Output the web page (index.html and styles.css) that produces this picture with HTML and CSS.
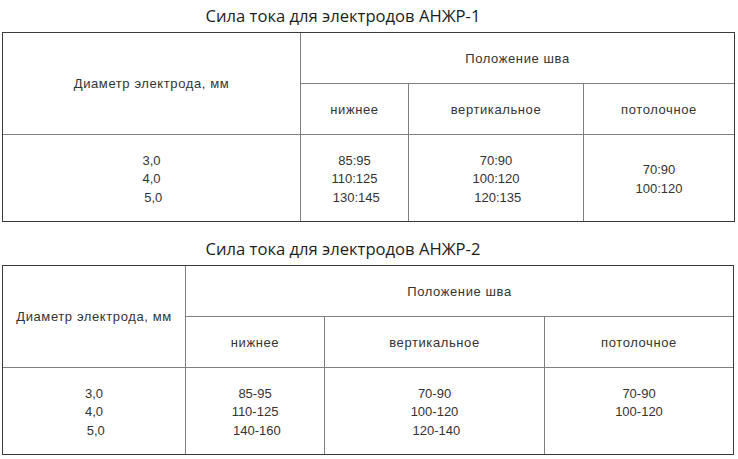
FILE: index.html
```html
<!DOCTYPE html>
<html lang="ru">
<head>
<meta charset="utf-8">
<title>Сила тока для электродов АНЖР</title>
<link rel="stylesheet" href="styles.css">
</head>
<body>
<div class="page">
  <h2 class="title">Сила тока для электродов АНЖР-1</h2>
  <div class="tbl tbl-1">
    <div class="cell head c-diam">Диаметр электрода, мм</div>
    <div class="cell head c-pos">Положение шва</div>
    <div class="cell head">нижнее</div>
    <div class="cell head">вертикальное</div>
    <div class="cell head">потолочное</div>
    <div class="cell body"><span>3,0</span><span>4,0</span><span>&nbsp;5,0</span></div>
    <div class="cell body"><span>85:95</span><span>110:125</span><span>&nbsp;130:145</span></div>
    <div class="cell body"><span>70:90</span><span>100:120</span><span>&nbsp;120:135</span></div>
    <div class="cell body"><span>70:90</span><span>100:120</span></div>
  </div>

  <h2 class="title title-2">Сила тока для электродов АНЖР-2</h2>
  <div class="tbl tbl-2">
    <div class="cell head c-diam">Диаметр электрода, мм</div>
    <div class="cell head c-pos">Положение шва</div>
    <div class="cell head">нижнее</div>
    <div class="cell head">вертикальное</div>
    <div class="cell head">потолочное</div>
    <div class="cell body"><span>3,0</span><span>4,0</span><span>&nbsp;5,0</span></div>
    <div class="cell body"><span>85-95</span><span>110-125</span><span>&nbsp;140-160</span></div>
    <div class="cell body"><span>70-90</span><span>100-120</span><span>&nbsp;120-140</span></div>
    <div class="cell body"><span>70-90</span><span>100-120</span><span>&nbsp;</span></div>
  </div>
</div>
</body>
</html>
```

FILE: styles.css
```css
* { box-sizing: border-box; }

html, body {
  margin: 0;
  padding: 0;
  background: #ffffff;
}

.page {
  width: 738px;
  padding-left: 2px;
}

.title {
  margin: 0;
  width: 682px;
  height: 32px;
  line-height: 32px;
  text-align: center;
  font-family: "Open Sans", "Noto Sans", sans-serif;
  font-weight: 400;
  font-size: 16.6px;
  color: #1c1c1c;
}

.title-2 {
  margin-top: 11px;
}

.tbl {
  display: grid;
  gap: 1px;
  background: #808080;
  border: 1px solid #3a3a3a;
  grid-template-rows: 50px 50px 86px;
  font-family: "Liberation Sans", Arial, sans-serif;
  font-size: 13px;
  color: #333333;
}

.tbl-1 {
  width: 733px;
  grid-template-columns: 297px 107px 174px 150px;
}

.tbl-2 {
  width: 732px;
  grid-template-columns: 182px 138px 219px 188px;
}

.cell {
  background: #ffffff;
  display: flex;
  flex-direction: column;
  align-items: center;
  justify-content: center;
  text-align: center;
  line-height: 18px;
}

.head {
  letter-spacing: 0.6px;
  padding-top: 2px;
}

.c-diam {
  grid-row: 1 / span 2;
  padding-top: 0;
}

.c-pos {
  grid-column: 2 / span 3;
}

.body {
  line-height: 18.5px;
  padding-top: 3px;
}

.body span {
  white-space: pre;
}
```
